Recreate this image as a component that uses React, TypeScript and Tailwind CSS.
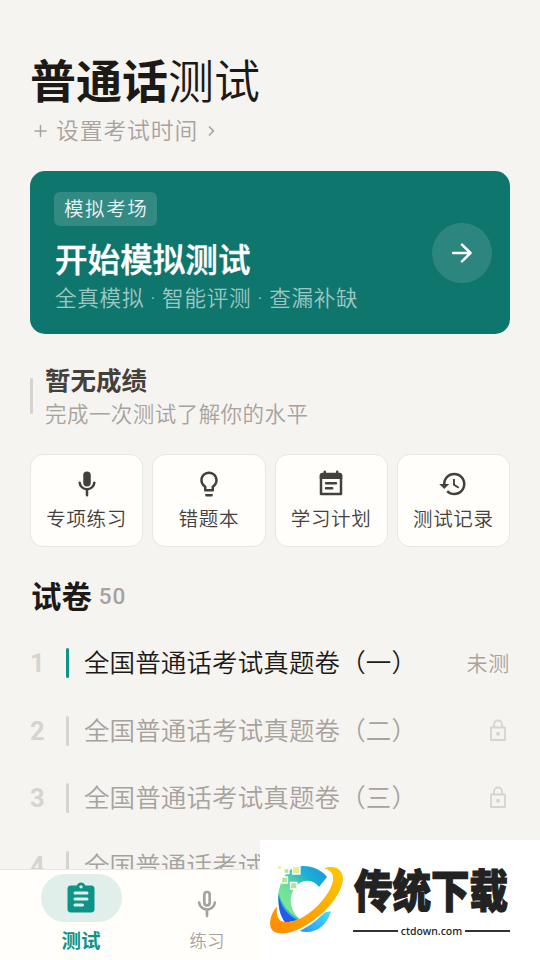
import type { ReactNode } from 'react'
import clsx from 'clsx'
import { MdHistory, MdLightbulbOutline } from 'react-icons/md'

const papers = [
  { id: 1, title: '全国普通话考试真题卷（一）', locked: false },
  { id: 2, title: '全国普通话考试真题卷（二）', locked: true },
  { id: 3, title: '全国普通话考试真题卷（三）', locked: true },
  { id: 4, title: '全国普通话考试真题卷（四）', locked: true },
]

function ArrowIcon() {
  return (
    <svg viewBox="0 0 24 24" className="size-[30px]" fill="none" stroke="currentColor" strokeWidth="2" strokeLinecap="round" strokeLinejoin="round">
      <path d="M5 12h13.5M12 5.3l6.8 6.7-6.8 6.7" />
    </svg>
  )
}

function MicIcon({ className, filled }: { className: string; filled?: boolean }) {
  return (
    <svg viewBox="0 0 24 24" className={className} fill="none" stroke="currentColor" strokeWidth="2" strokeLinecap="round">
      <path d="M10 5a2 2 0 0 1 4 0v6a2 2 0 0 1-4 0z" fill={filled ? 'currentColor' : 'none'} />
      <path d="M6.1 11a5.95 5.95 0 0 0 11.8 0M12 17v4" />
    </svg>
  )
}

function PlanIcon() {
  return (
    <svg viewBox="0 0 24 24" className="size-[30px]" fill="none" stroke="currentColor" strokeWidth="2" strokeLinecap="round" strokeLinejoin="round">
      <path d="M4 5h16v15H4zM7 2.2V4M17 2.2V4" />
      <path d="M3 5a2 2 0 0 1 2-2h14a2 2 0 0 1 2 2v3H3z" fill="currentColor" stroke="none" />
      <path d="M8 11.4h8M8 15.4h5" strokeWidth="1.9" />
    </svg>
  )
}

function LockIcon() {
  return (
    <svg viewBox="0 0 24 24" className="size-6" fill="none" stroke="currentColor" strokeWidth="1.8" strokeLinejoin="round">
      <path d="M5 8.500h14v12.500H5zM8 8.500V5.500a4 4 0 0 1 8 0v3" />
      <circle cx="12" cy="14.700" r="2" fill="currentColor" stroke="none" />
    </svg>
  )
}

function ClipboardIcon() {
  return (
    <svg viewBox="0 0 24 24" className="size-9" fill="currentColor">
      <path d="M19 3h-4.18C14.4 1.84 13.3 1 12 1s-2.4.84-2.82 2H5c-1.1 0-2 .9-2 2v14c0 1.1.9 2 2 2h14c1.1 0 2-.9 2-2V5c0-1.1-.9-2-2-2z" />
      <circle cx="12" cy="3.9" r="1.1" fill="#e1efeb" />
      <path d="M8 8h8M8 12h8M8 16h5" stroke="#e1efeb" strokeWidth="2" strokeLinecap="round" />
    </svg>
  )
}

const actions: { label: string; icon: ReactNode }[] = [
  { label: '专项练习', icon: <MicIcon className="size-[30px]" filled /> },
  { label: '错题本', icon: <MdLightbulbOutline size={30} /> },
  { label: '学习计划', icon: <PlanIcon /> },
  { label: '测试记录', icon: <MdHistory size={30} /> },
]

function Logo() {
  return (
    <svg viewBox="0 0 85 80" className="h-20 w-[85px] shrink-0">
      <defs>
        <linearGradient id="arc" x1="0" y1="1" x2="1" y2="0">
          <stop offset="0" stopColor="#8df08a" />
          <stop offset=".4" stopColor="#6ae09a" />
          <stop offset=".7" stopColor="#1fb0d0" />
          <stop offset="1" stopColor="#1593e6" />
        </linearGradient>
        <linearGradient id="ring" x1="0" y1="1" x2="1" y2="0">
          <stop offset="0" stopColor="#ff8a00" />
          <stop offset="1" stopColor="#ffc800" />
        </linearGradient>
        <linearGradient id="tail" x1="0" y1="1" x2="1" y2="0">
          <stop offset="0" stopColor="#2496f5" />
          <stop offset="1" stopColor="#48e0ff" />
        </linearGradient>
      </defs>
      {/* Letter C with its shaded outer edge */}
      <path d="M62 17C56 9 43 4 31 7 18 11 12 29 13.500 43c1 9 3 15 7 19l14-3C24 50 23 35 31 26c7-7 17-7 23 1z" fill="url(#arc)" />
      <path d="M13.500 32C16 43 22 52 34 59l-5 3c-10-3-16-14-15.500-30z" fill="#35b5d0" />
      <path d="M13.500 35c2 10 7 18 18 25l-11 3C15 56 13 47 13.500 35z" fill="#2359ee" />
      <path d="M34.500 71c14 4 27-4 31.500-19.500-3 0-5 .5-7 1.500-7 7-14 13-24.500 18z" fill="url(#tail)" />
      <path
        d="M59.500 8.500C69 4.500 78 9 78 19 77 34 60 55 38 67 24 75 8 76 5.500 67 4 60 7 52 12 46.500c-1 9 1 15 8 15.500 11 1 26-8 37-21C67 29 71 18 66 12c-2-2-4-3-6.500-3.500z"
        fill="url(#ring)"
      />
      <g stroke="#fff" strokeWidth="1.3">
        <path d="M27.500 6.500h7.500V14h-7.500z" fill="#e3f08f" />
        <path d="M25.500 22.500h6.500v6.500h-6.500z" fill="#b6e68a" />
        <path d="M19 8.500h5v5h-5zM16.500 17h6v6h-6z" fill="#b1e790" />
        <path d="M12.500 5.500h4v4h-4z" fill="#e3f08f" />
      </g>
    </svg>
  )
}

export default function App() {
  return (
    <div className="relative flex h-[960px] w-[540px] flex-col overflow-hidden bg-[#f5f4f0] font-['Roboto','Noto_Sans_CJK_SC',sans-serif] font-normal text-[#1c1917]">
      <main className="min-h-0 flex-1 overflow-hidden px-[30px] pt-[49px]">
        <h1 className="h-[66px] text-[46px] leading-[67px]">
          <span className="font-bold">普通话</span>
          <span className="font-[350]">测试</span>
        </h1>
        <div className="flex h-8 items-center pt-[2px] text-[22.8px] tracking-[0.9px] text-[#a8a29e]">
          <svg viewBox="0 0 21 21" className="size-[21px]" fill="none" stroke="currentColor" strokeWidth="1.5" strokeLinecap="round">
            <path d="M5 9h11M10.500 3.500v11" />
          </svg>
          <span className="ml-[5px] font-[350]">设置考试时间</span>
          <svg viewBox="0 0 21 21" className="ml-[2px] size-[21px]" fill="none" stroke="currentColor" strokeWidth="1.7" strokeLinecap="round" strokeLinejoin="round">
            <path d="M9.500 5l4 4-4 4" />
          </svg>
        </div>

        {/* Mock test card */}
        <section className="mt-6 flex h-[163px] items-center justify-between rounded-[15px] bg-[#0f766e] pr-[18px] pl-6 text-white">
          <div>
            <span className="flex h-[34px] w-[103px] items-center rounded-md bg-white/15 pt-[2px] pl-[10px] text-[19.5px] leading-[34px] font-[350] tracking-[1.6px] text-white/90">模拟考场</span>
            <h2 className="mt-[12px] h-[45px] pl-px text-[32.6px] leading-[46px] font-medium [-webkit-text-stroke:0.4px_white]">开始模拟测试</h2>
            <p className="h-[31px] pl-px text-[21.6px] leading-8 font-[350] tracking-[0.7px] whitespace-nowrap text-white/60">全真模拟 · 智能评测 · 查漏补缺</p>
          </div>
          <button className="flex size-[60px] items-center justify-center rounded-full bg-white/12" aria-label="开始">
            <ArrowIcon />
          </button>
        </section>

        {/* Score summary */}
        <section className="mt-[27px] flex h-[69px] items-center gap-[12px]">
          <span className="h-9 w-[3px] rounded-full bg-[#d6d3d1]" />
          <div className="pt-[2px]">
            <h3 className="h-[35px] text-[25.5px] leading-9 font-bold text-[#44403c]">暂无成绩</h3>
            <p className="h-8 text-[21.5px] leading-[34px] font-[350] tracking-[0.45px] text-[#a8a29e]">完成一次测试了解你的水平</p>
          </div>
        </section>

        <div className="mt-[24px] grid grid-cols-4 gap-[9px]">
          {actions.map((action) => (
            <button
              key={action.label}
              className="flex h-[93px] flex-col items-center rounded-[13px] border border-[#e9e7e4] bg-[#fffefa] pt-[14px] text-[#44403c]"
            >
              {action.icon}
              <span className="mt-[7px] text-[19.5px] leading-7 font-[350] tracking-[0.7px]">{action.label}</span>
            </button>
          ))}
        </div>

        {/* Papers */}
        <div className="mt-[29px] flex h-11 items-center gap-[7px] pl-px">
          <h3 className="text-[30.4px] leading-[44px] font-bold">试卷</h3>
          <span className="pb-[3px] text-[22.5px] font-medium tracking-[0.9px] text-[#a8a29e]">50</span>
        </div>
        <ul className="mt-[10px]">
          {papers.map((paper) => (
            <li key={paper.id} className="flex h-[67.5px] items-center border-b border-[#f3f2ef]">
              <span className="w-9 text-[25.5px] font-bold text-[#d6d3d1]">{paper.id}</span>
              <span className={clsx('h-[30px] w-[3px] rounded-full', paper.locked ? 'bg-[#d6d3d1]' : 'bg-[#0d9488]')} />
              <span className={clsx('ml-[15px] flex-1 text-[25.5px] font-[350] tracking-[0.12px] whitespace-nowrap', paper.locked && 'text-[#a8a29e]')}>{paper.title}</span>
              {paper.locked ? (
                <span className="text-[#d6d3d1]"><LockIcon /></span>
              ) : (
                <span className="pt-[2px] text-[21px] font-[350] tracking-[0.7px] text-[#a8a29e]">未测</span>
              )}
            </li>
          ))}
        </ul>
      </main>

      <nav className="flex h-[91px] shrink-0 border-t border-[#e7e5e4] bg-[#fffefa] pl-[18px]">
        <div className="flex w-[126px] flex-col items-center pt-1 text-[#0d9488]">
          <span className="flex h-12 w-[81px] items-center justify-center rounded-full bg-[#e1efeb] pt-px">
            <ClipboardIcon />
          </span>
          <span className="mt-[6px] text-[19.5px] leading-7 font-bold">测试</span>
        </div>
        <div className="flex w-[126px] flex-col items-center pt-[18px] text-[#a8a29e]">
          <MicIcon className="size-8" />
          <span className="mt-[7px] text-[17.5px] leading-7 font-[350]">练习</span>
        </div>
      </nav>

      {/* Site badge over the bottom right corner */}
      <aside className="absolute right-0 bottom-0 flex h-[120px] w-[280px] items-center bg-white pl-[5px] text-[#222]">
        <Logo />
        <div className="ml-[2px] flex w-[158px] flex-col pt-[2px]">
          <span className="h-[52px] origin-left scale-y-[1.18] pt-[2px] pl-[2px] text-[38.5px] leading-[52px] font-black whitespace-nowrap [-webkit-text-stroke:1px_#222]">传统下载</span>
          <div className="mt-[7px] flex items-center gap-[3px] pl-px font-['Noto_Sans'] text-[10.5px] leading-4 font-medium">
            <i className="h-[2px] flex-1 bg-[#333]" />
            ctdown.com
            <i className="h-[2px] flex-1 bg-[#333]" />
          </div>
        </div>
      </aside>
    </div>
  )
}
